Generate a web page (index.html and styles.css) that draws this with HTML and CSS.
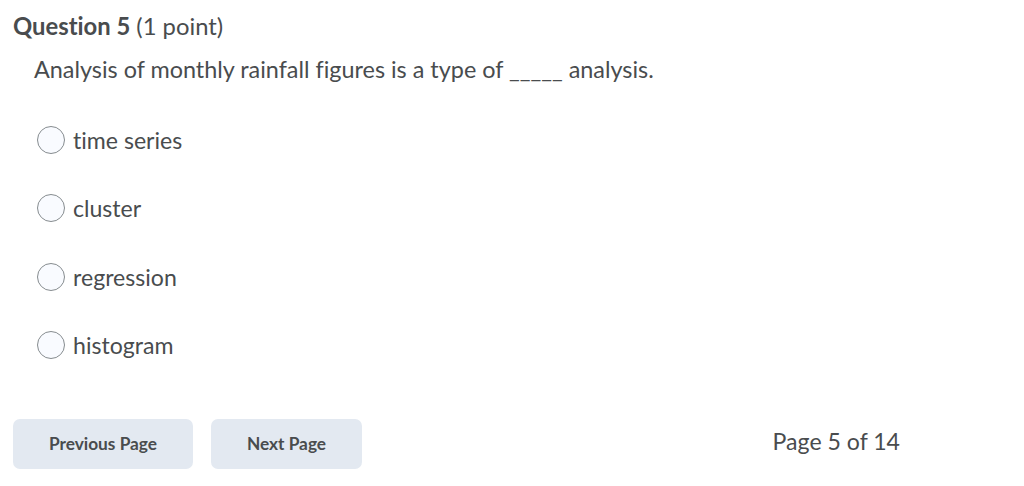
FILE: index.html
```html
<!DOCTYPE html>
<html lang="en">
<head>
  <meta charset="UTF-8">
  <title>Question 5</title>
  <link rel="stylesheet" href="styles.css">
</head>
<body>
  <div class="quiz">
    <h2 class="question-title"><strong>Question 5</strong> (1 point)</h2>
    <p class="question-text">Analysis of monthly rainfall figures is a type of _____ analysis.</p>

    <div class="options">
      <label class="option"><input type="radio" name="q5"><span>time series</span></label>
      <label class="option"><input type="radio" name="q5"><span>cluster</span></label>
      <label class="option"><input type="radio" name="q5"><span>regression</span></label>
      <label class="option"><input type="radio" name="q5"><span>histogram</span></label>
    </div>

    <div class="pager">
      <button class="page-btn prev">Previous Page</button>
      <button class="page-btn next">Next Page</button>
      <span class="page-count">Page 5 of 14</span>
    </div>
  </div>
</body>
</html>
```

FILE: styles.css
```css
body {
  margin: 0;
  padding: 0;
  background: #ffffff;
  font-family: 'Lato', 'Liberation Sans', sans-serif;
  font-variant-ligatures: none;
  color: #494c4e;
}

.quiz {
  padding: 12px 13px 0 13px;
  width: 900px;
}

.question-title {
  margin: 0;
  font-size: 23.8px;
  font-weight: normal;
  line-height: 28px;
}

.question-title strong {
  font-weight: bold;
}

.question-text {
  margin: 14px 0 0 21px;
  font-size: 23.4px;
  line-height: 30px;
}

.options {
  margin: 42px 0 0 24px;
  display: flex;
  flex-direction: column;
  gap: 40.3px;
}

.option {
  display: flex;
  align-items: center;
  gap: 8px;
  font-size: 23.1px;
  line-height: 28px;
}

.option input {
  appearance: none;
  -webkit-appearance: none;
  margin: 0;
  width: 28px;
  height: 28px;
  border-radius: 50%;
  border: 1px solid #868c8f;
  background: #f9fbff;
}

.pager {
  margin-top: 60px;
  display: flex;
  align-items: center;
}

.page-btn {
  height: 50px;
  border: none;
  border-radius: 7px;
  background: #e3e9f1;
  color: #494c4e;
  font-family: 'Lato', 'Liberation Sans', sans-serif;
  font-variant-ligatures: none;
  font-size: 17.3px;
  font-weight: bold;
  padding: 0;
  margin-right: 18px;
}

.page-btn.prev {
  width: 180px;
}

.page-btn.next {
  width: 151px;
}

.page-count {
  margin-left: auto;
  margin-right: 13px;
  padding-bottom: 6px;
  font-size: 23.1px;
}
```
